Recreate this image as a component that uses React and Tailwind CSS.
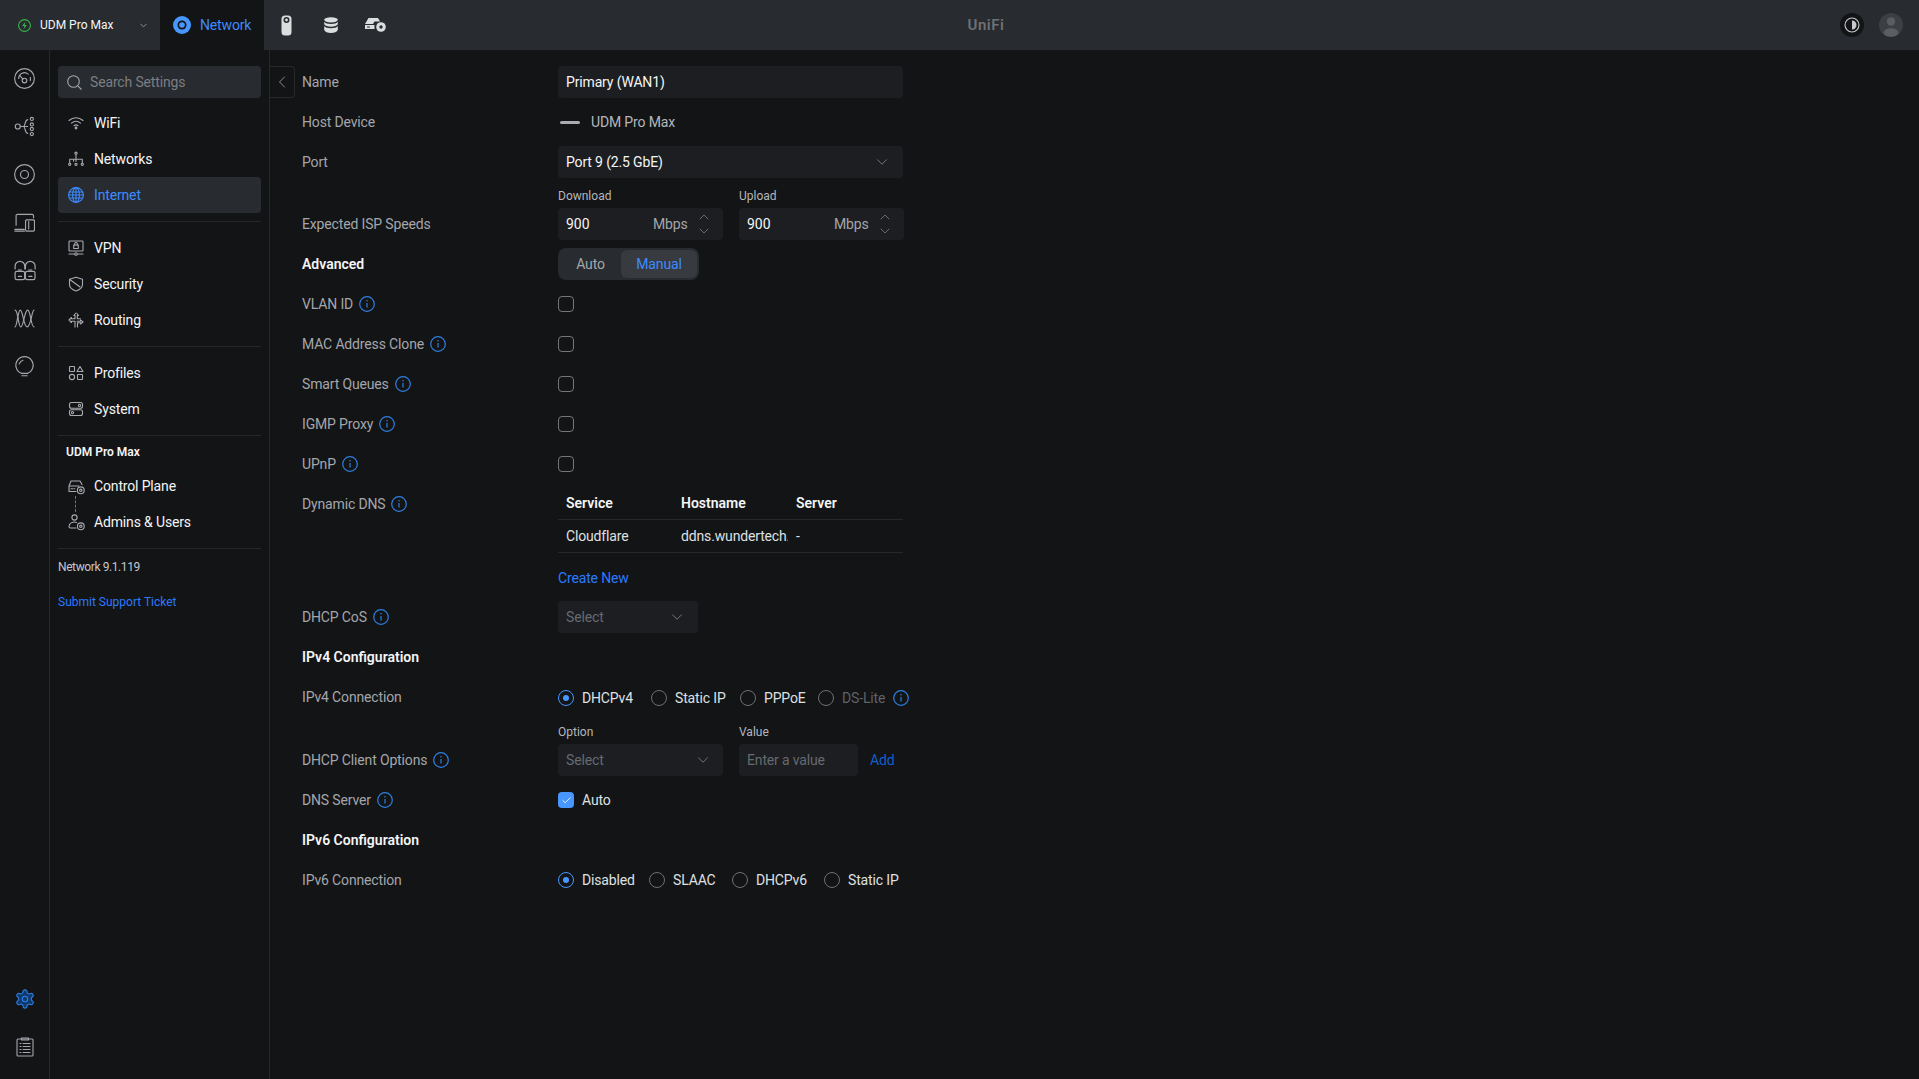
import React from "react";
import { ChevronDown, ChevronUp, ChevronLeft, Check } from "lucide-react";

const line = {
  fill: "none",
  stroke: "currentColor",
  strokeWidth: 1.1,
  strokeLinecap: "round",
  strokeLinejoin: "round",
};

function Ico({ size = 20, vb = 20, className = "", children }) {
  return (
    <svg width={size} height={size} viewBox={`0 0 ${vb} ${vb}`} className={`shrink-0 ${className}`} {...line}>
      {children}
    </svg>
  );
}

const railIcons = [
  <Ico size={21} key="dash">
    <circle cx="10" cy="10" r="9.4" />
    <path d="M4.5 10a5.5 5.5 0 0 1 9-4.2M15.5 9a5.5 5.5 0 0 1 0 3" />
    <circle cx="10" cy="12" r="2.2" />
    <path d="M8.5 10.5 5.8 7.5" />
  </Ico>,
  <Ico size={21} key="topo">
    <circle cx="3.6" cy="10" r="2.4" />
    <path d="M6 10h4M9 10c2 0 1-6 4-6.5M9 10c2 0 1 6 4 6.5M10 10h3" />
    <circle cx="17" cy="2.8" r="1.5" />
    <circle cx="17" cy="8" r="1.5" />
    <circle cx="17" cy="12.4" r="1.5" />
    <circle cx="17" cy="17.2" r="1.5" />
  </Ico>,
  <Ico size={21} key="target">
    <circle cx="10" cy="10" r="9.4" />
    <circle cx="10" cy="10" r="3.8" />
  </Ico>,
  <Ico size={21} key="devices">
    <path d="M2 12.5V3.5a1.3 1.3 0 0 1 1.3-1.3h14a1.3 1.3 0 0 1 1.3 1.3v2" />
    <path d="M.8 16.5h9M.8 18.2h9.2" />
    <rect x="11" y="7.5" width="8.5" height="10.7" rx="1" />
    <path d="M14 9.2v7" />
  </Ico>,
  <Ico size={22} key="clients">
    <path d="M1 9V6.5a4.4 4.4 0 0 1 8.8 0V9M10.4 9V6.5a4.4 4.4 0 0 1 8.8 0V9" />
    <rect x="1" y="11.2" width="8.7" height="7.6" rx="1.6" />
    <rect x="10.4" y="11.2" width="8.7" height="7.6" rx="1.6" />
    <path d="M4 15.8h2.8M13.5 15.8h2.8" />
    <path d="M3.5 9h3.6v2.2H3.5zM13 9h3.6v2.2H13z" fill="currentColor" opacity=".55" stroke="none" />
  </Ico>,
  <Ico size={21} key="wave">
    <path d="M1 2c3 0 3 16 5.500 16S10 2 13 2s3 16 6 16" />
    <path d="M1 18c2 0 2.500-16 5-16s3 16 6.500 16S17 2 19 2" />
  </Ico>,
  <Ico size={21} key="bulb">
    <path d="M7 16.500A8.200 8.200 0 1 1 13 16.500" />
    <path d="M7 16.500h6M7.500 18.800h5" />
    <path d="M5 7.500a5.500 5.500 0 0 1 3.500-3.500" />
  </Ico>,
];

const navIcons = {
  wifi: (
    <Ico size={16} vb={16}>
      <path d="M1 5.500c4-3.600 10-3.600 14 0M3.500 8.200c2.700-2.300 6.300-2.300 9 0M6 10.600c1.300-.9 2.700-.9 4 0" />
      <circle cx="8" cy="13" r=".9" fill="currentColor" />
    </Ico>
  ),
  networks: (
    <Ico size={16} vb={16}>
      <circle cx="8" cy="2.200" r="1.100" />
      <path d="M8 3.300v7M1.700 12V8.300h12.600V12M5.600 8.300v2" />
      <circle cx="1.700" cy="13.300" r="1.100" />
      <circle cx="8" cy="13.300" r="1.100" />
      <circle cx="14.300" cy="13.300" r="1.100" />
    </Ico>
  ),
  globe: (
    <Ico size={16} vb={16}>
      <circle cx="8" cy="8" r="7.400" />
      <ellipse cx="8" cy="8" rx="3.400" ry="7.400" />
      <path d="M8 .6v14.800M1.300 5h13.400M1.300 11h13.400M.6 8h14.800" />
    </Ico>
  ),
  vpn: (
    <Ico size={16} vb={16}>
      <rect x="1" y="1" width="14" height="10" rx=".8" />
      <rect x="5.700" y="5" width="4.600" height="3.500" />
      <path d="M6.700 5V3.800a1.300 1.300 0 0 1 2.600 0V5M1 14h5.500M9.500 14H15" />
      <circle cx="8" cy="14" r="1.300" />
    </Ico>
  ),
  security: (
    <Ico size={16} vb={16}>
      <path d="M1.500 3.200 8 1.300l6.500 1.900v5c0 3.400-3 5.600-6.500 6.800-3.500-1.200-6.500-3.400-6.500-6.800z" />
      <path d="M1.800 3.500 12 11" />
    </Ico>
  ),
  routing: (
    <Ico size={16} vb={16}>
      <path d="M8 1 5.800 3.500H7v3.300H3.500V5.500L1 8l2.500 2.500V9.300H7V15" />
      <path d="M9 1.500 10.500 3.500H9.300v3.300h3.200M9 9.200h3.500V8L15 10l-2.500 2v-1.200H9.500V15" />
    </Ico>
  ),
  profiles: (
    <Ico size={16} vb={16}>
      <rect x="1.500" y="1.500" width="5" height="5" rx=".6" />
      <path d="M12 1.500 15 6.500H9z" />
      <circle cx="4" cy="12" r="2.600" />
      <rect x="9.500" y="9.500" width="5" height="5" rx=".6" />
    </Ico>
  ),
  system: (
    <Ico size={16} vb={16}>
      <rect x="1.500" y="1.500" width="13" height="5.800" rx="2" />
      <rect x="1.500" y="8.700" width="13" height="5.800" rx="2" />
      <circle cx="11.500" cy="4.400" r="1.100" />
      <circle cx="4.500" cy="11.600" r="1.100" />
    </Ico>
  ),
  control: (
    <Ico size={17} vb={17}>
      <path d="M1 8 3 3h9l2 3.500M1 8v5.500h7M1 8h10" />
      <path d="M3 10.700h1.500M5.800 10.700h1" />
      <circle cx="12.800" cy="12.300" r="3.400" />
      <circle cx="12.800" cy="12.300" r="1.200" />
    </Ico>
  ),
  admins: (
    <Ico size={17} vb={17}>
      <circle cx="6.500" cy="3.500" r="2.600" />
      <path d="M8.500 8.500C5.500 7 1 9 1 12.500c0 1 .8 1.500 1.500 1.500H8" />
      <circle cx="12.800" cy="12.300" r="3.400" />
      <circle cx="12.800" cy="12.300" r="1.200" />
    </Ico>
  ),
};

function Info() {
  return (
    <svg width="16" height="16" viewBox="0 0 16 16" className="shrink-0 text-[#2f7fe0]" fill="none" stroke="currentColor" strokeWidth="1.200">
      <circle cx="8" cy="8" r="7.300" />
      <path d="M8 7v4.500" />
      <circle cx="8" cy="4.700" r=".8" fill="currentColor" stroke="none" />
    </svg>
  );
}

function NavItem({ icon, label, active }) {
  return (
    <div className={`relative h-9 flex items-center pl-[10px] gap-[10px] rounded-[4px] text-sm ${active ? "bg-[#282b2f] text-[#3d8bff]" : "text-[#f4f5f6]"}`}>
      <span className={`w-[16px] flex justify-center ${active ? "" : "text-[#a9abb0]"}`}>{icon}</span>
      <span>{label}</span>
    </div>
  );
}

function Row({ label, info, bold, children, className = "" }) {
  return (
    <div className={`flex h-10 items-center ${className}`}>
      <div className={`w-[256px] shrink-0 flex items-center gap-[6px] text-sm ${bold ? "font-semibold tracking-normal text-[#f4f5f6]" : "text-[#a4a6ab]"}`}>
        <span>{label}</span>
        {info && <Info />}
      </div>
      {children}
    </div>
  );
}

function Checkbox() {
  return <div className="size-4 rounded-[4px] border border-[#74777c]" />;
}

function Radio({ label, on, dim, className = "" }) {
  return (
    <div className={`flex items-center gap-2 text-sm ${dim ? "text-[#5f6267]" : "text-[#dfe0e2]"} ${className}`}>
      <span className={`size-4 rounded-full border flex items-center justify-center ${on ? "border-[#4797ff]" : "border-[#6c6f74]"}`}>
        {on && <span className="size-[6px] rounded-full bg-[#4797ff]" />}
      </span>
      {label}
    </div>
  );
}

function Select({ text, placeholder, className = "" }) {
  return (
    <div className={`h-8 flex items-center justify-between rounded-[4px] bg-[#1c1e21] pl-2 pr-[12px] text-sm ${placeholder ? "text-[#666a70]" : "text-[#f4f5f6]"} ${className}`}>
      <span>{text}</span>
      <ChevronDown size={18} strokeWidth={1} className="text-[#8f9297]" />
    </div>
  );
}

function SpeedInput({ label }) {
  return (
    <div className="w-[165px]">
      <div className="h-[12px] mb-[6px] flex items-center text-xs tracking-normal text-[#b4b7bc]">{label}</div>
      <div className="h-8 flex items-center rounded-[4px] bg-[#1c1e21] pl-2 text-sm">
        <input readOnly defaultValue="900" className="w-[87px] bg-transparent tracking-normal text-[#f4f5f6] outline-none" />
        <span className="text-[#a4a6ab] w-[43px]">Mbps</span>
        <span className="flex flex-col -space-y-[2px] text-[#8f9297]">
          <ChevronUp size={16} strokeWidth={1} />
          <ChevronDown size={16} strokeWidth={1} />
        </span>
      </div>
    </div>
  );
}

function TopBar() {
  return (
    <div className="h-[50px] shrink-0 bg-[#282b2f] flex items-center">
      <div className="w-[160px] flex items-center pl-[18px] text-xs tracking-normal text-[#f4f5f6]">
        <svg width="13" height="13" viewBox="0 0 13 13" className="mr-[9px]" fill="none">
          <circle cx="6.500" cy="6.500" r="5.900" stroke="#39b54a" strokeWidth="1.100" />
          <path d="M7.300 2.800 4.200 7h2.200l-.8 3.200L8.800 6H6.600z" fill="#39b54a" />
        </svg>
        <span className="w-[98px]">UDM Pro Max</span>
        <ChevronDown size={11} strokeWidth={1.500} className="text-[#b4b7bc]" />
      </div>
      <div className="w-[104px] h-full bg-[#131416] flex items-center pl-[13px] gap-[9px] text-sm text-[#3d8bff]">
        <svg width="18" height="18" viewBox="0 0 18 18">
          <circle cx="9" cy="9" r="9" fill="#4797ff" />
          <circle cx="9" cy="9" r="4.500" fill="#131416" />
          <circle cx="9" cy="9" r="2.800" fill="#4797ff" />
        </svg>
        Network
      </div>
      <svg width="11" height="21" viewBox="0 0 11 21" className="ml-[17px]">
        <rect x=".5" y=".5" width="10" height="20" rx="3.500" fill="#dcdddf" />
        <circle cx="5.500" cy="5" r="3" fill="#282b2f" />
        <circle cx="5.500" cy="5" r="1.400" fill="#dcdddf" />
      </svg>
      <svg width="14" height="16" viewBox="0 0 14 16" className="ml-[32px]" fill="#dcdddf">
        <ellipse cx="7" cy="2.800" rx="6.800" ry="2.600" />
        <path d="M.2 4.800c1 1.500 3.500 2.200 6.800 2.200s5.800-.7 6.800-2.200v2.500C13 9 10.300 9.700 7 9.700S1 9 .2 7.300zM.2 9c1 1.500 3.500 2.200 6.800 2.200s5.800-.7 6.800-2.200v4c-.8 2-3.500 3-6.800 3s-6-1-6.800-3z" />
      </svg>
      <svg width="21" height="14" viewBox="0 0 21 14" className="ml-[27px]" fill="#dcdddf">
        <path d="M3.500 0h9.500l2 3.500H9.500L8 6H0z" />
        <path d="M0 7h9.500v4H0z" />
        <circle cx="16" cy="9" r="4.800" />
        <circle cx="16" cy="9" r="1.700" fill="#282b2f" />
        <path d="M2 9h3" stroke="#282b2f" />
      </svg>
      <div className="flex-1 flex justify-center pr-[254px]">
        <span className="text-[15px] font-semibold text-[#6e7176] tracking-[.5px]">UniFi</span>
      </div>
      <div className="flex items-center gap-[15px] pr-[16px]">
        <span className="size-6 rounded-full bg-[#131416] flex items-center justify-center">
          <svg width="16" height="16" viewBox="0 0 16 16">
            <circle cx="8" cy="8" r="7" fill="none" stroke="#c8cacd" strokeWidth="1.100" />
            <path d="M8 3.500a4.500 4.500 0 0 1 0 9z" fill="#c8cacd" />
          </svg>
        </span>
        <svg width="24" height="24" viewBox="0 0 24 24">
          <circle cx="12" cy="12" r="12" fill="#3c3f44" />
          <circle cx="12" cy="8.500" r="4.200" fill="#5a5d62" />
          <ellipse cx="12" cy="19.500" rx="7.500" ry="4.300" fill="#5a5d62" />
        </svg>
      </div>
    </div>
  );
}

function Rail() {
  return (
    <div className="w-[50px] shrink-0 border-r border-[#26282c] flex flex-col items-center justify-between text-[#a4a6ab]">
      <div className="flex flex-col pt-[4px]">
        {railIcons.map((icon, i) => (
          <div key={i} className="h-12 flex items-center justify-center">{icon}</div>
        ))}
      </div>
      <div className="flex flex-col pb-[8px]">
        <div className="h-12 flex items-center justify-center text-[#2f7fe0]">
          <svg width="22" height="22" viewBox="0 0 24 24" fill="#0f3a70" stroke="currentColor" strokeWidth="1.200" strokeLinejoin="round">
            <path d="M12.220 2h-.44a2 2 0 0 0-2 2v.180a2 2 0 0 1-1 1.730l-.43.250a2 2 0 0 1-2 0l-.15-.080a2 2 0 0 0-2.730.730l-.220.380a2 2 0 0 0 .730 2.730l.150.100a2 2 0 0 1 1 1.720v.510a2 2 0 0 1-1 1.740l-.150.090a2 2 0 0 0-.730 2.730l.220.380a2 2 0 0 0 2.730.730l.150-.080a2 2 0 0 1 2 0l.430.250a2 2 0 0 1 1 1.730V20a2 2 0 0 0 2 2h.440a2 2 0 0 0 2-2v-.180a2 2 0 0 1 1-1.730l.430-.250a2 2 0 0 1 2 0l.150.080a2 2 0 0 0 2.730-.730l.220-.390a2 2 0 0 0-.730-2.730l-.150-.080a2 2 0 0 1-1-1.740v-.500a2 2 0 0 1 1-1.740l.150-.090a2 2 0 0 0 .730-2.730l-.220-.380a2 2 0 0 0-2.730-.730l-.150.080a2 2 0 0 1-2 0l-.430-.250a2 2 0 0 1-1-1.730V4a2 2 0 0 0-2-2z" />
            <circle cx="12" cy="12" r="3" />
          </svg>
        </div>
        <div className="h-12 flex items-center justify-center">
          <Ico size={20}>
            <rect x="2" y="2" width="16" height="17" rx="1" />
            <path d="M6.500 1h7v2h-7zM8 6.500h7M8 9.500h7M8 12.500h7M8 15.500h7M5 6.500h1M5 9.500h1M5 12.500h1M5 15.500h1" />
          </Ico>
        </div>
      </div>
    </div>
  );
}

function Divider({ className = "" }) {
  return <div className={`h-px bg-[#25272b] ${className}`} />;
}

function Sidebar() {
  return (
    <div className="w-[220px] shrink-0 border-r border-[#26282c] px-2 pt-4">
      <div className="h-8 rounded-[4px] bg-[#282b2f] flex items-center pl-[9px] gap-[8px] mb-[7px]">
        <svg width="15" height="15" viewBox="0 0 15 15" fill="none" stroke="#a4a6ab" strokeWidth="1.100">
          <circle cx="6.500" cy="6.500" r="5.800" />
          <path d="m10.800 10.800 3.700 3.700" />
        </svg>
        <input readOnly placeholder="Search Settings" className="bg-transparent w-[160px] text-sm outline-none placeholder:text-[#7b7e83]" />
      </div>
      <NavItem icon={navIcons.wifi} label="WiFi" />
      <NavItem icon={navIcons.networks} label="Networks" />
      <NavItem icon={navIcons.globe} label="Internet" active />
      <Divider className="mt-2 mb-[8px]" />
      <NavItem icon={navIcons.vpn} label="VPN" />
      <NavItem icon={navIcons.security} label="Security" />
      <NavItem icon={navIcons.routing} label="Routing" />
      <Divider className="mt-2 mb-[8px]" />
      <NavItem icon={navIcons.profiles} label="Profiles" />
      <NavItem icon={navIcons.system} label="System" />
      <Divider className="mt-2" />
      <div className="h-8 flex items-center pl-2 text-xs font-semibold tracking-normal text-[#f4f5f6]">UDM Pro Max</div>
      <div className="relative">
        <NavItem icon={navIcons.control} label="Control Plane" />
        <NavItem icon={navIcons.admins} label="Admins & Users" />
        <div className="absolute left-[17px] top-[28px] h-[16px] border-l border-dashed border-[#6c6f74]" />
      </div>
      <Divider className="mt-2" />
      <div className="h-[35px] flex items-center text-xs tracking-[-0.4px] text-[#c4c6ca]">Network 9.1.119</div>
      <div className="h-[36px] flex items-center text-xs tracking-normal text-[#2a7aff]">Submit Support Ticket</div>
    </div>
  );
}

function Form() {
  return (
    <div className="relative flex-1 pl-8 pt-3">
      <div className="absolute left-0 top-4 h-8 w-[25px] border border-l-0 border-[#26282c] rounded-r-[4px] flex items-center justify-center text-[#a4a6ab]">
        <ChevronLeft size={20} strokeWidth={1} />
      </div>
      <div className="w-[601px]">
        <Row label="Name">
          <input readOnly defaultValue="Primary (WAN1)" className="w-[345px] h-8 rounded-[4px] bg-[#1c1e21] px-2 text-sm text-[#f4f5f6] outline-none" />
        </Row>
        <Row label="Host Device">
          <div className="flex items-center text-sm text-[#b4b7bc]">
            <span className="w-[20px] h-[3px] ml-[2px] mr-[11px] rounded-full bg-[#a9abb0]" />
            UDM Pro Max
          </div>
        </Row>
        <Row label="Port">
          <Select text="Port 9 (2.5 GbE)" className="w-[345px]" />
        </Row>
        <div className="flex h-[62px]">
          <div className="w-[256px] shrink-0 pt-[32px] h-[62px] leading-[20px] text-sm text-[#a4a6ab]">Expected ISP Speeds</div>
          <div className="flex gap-4 pt-2">
            <SpeedInput label="Download" />
            <SpeedInput label="Upload" />
          </div>
        </div>
        <Row label="Advanced" bold>
          <div className="h-8 w-[141px] rounded-lg bg-[#282b2f] p-[2px] flex text-sm">
            <div className="w-[61px] flex items-center justify-center text-[#a4a6ab]">Auto</div>
            <div className="w-[76px] flex items-center justify-center rounded-md bg-[#373a3f] text-[#3d8bff]">Manual</div>
          </div>
        </Row>
        <Row label="VLAN ID" info><Checkbox /></Row>
        <Row label="MAC Address Clone" info><Checkbox /></Row>
        <Row label="Smart Queues" info><Checkbox /></Row>
        <Row label="IGMP Proxy" info><Checkbox /></Row>
        <Row label="UPnP" info><Checkbox /></Row>
        <div className="flex h-[113px]">
          <div className="w-[256px] shrink-0 h-10 flex items-center gap-[6px] text-sm text-[#a4a6ab]">
            Dynamic DNS <Info />
          </div>
          <div className="w-[345px] pt-[3px] text-sm">
            <div className="h-[33px] grid grid-cols-3 items-center border-b border-[#26282c] font-semibold tracking-normal text-[#f4f5f6]">
              <span className="px-2">Service</span>
              <span className="px-2">Hostname</span>
              <span className="px-2">Server</span>
            </div>
            <div className="h-[33px] grid grid-cols-3 items-center border-b border-[#26282c] text-[#dfe0e2]">
              <span className="px-2">Cloudflare</span>
              <span className="ml-2 overflow-hidden whitespace-nowrap">ddns.wundertech.net</span>
              <span className="px-2">-</span>
            </div>
            <div className="mt-[15px] text-[#2a7aff]">Create New</div>
          </div>
        </div>
        <Row label="DHCP CoS" info>
          <Select text="Select" placeholder className="w-[140px]" />
        </Row>
        <Row label="IPv4 Configuration" bold />
        <Row label="IPv4 Connection">
          <div className="flex items-center pt-px">
            <Radio label="DHCPv4" on className="w-[93px]" />
            <Radio label="Static IP" className="w-[89px]" />
            <Radio label="PPPoE" className="w-[78px]" />
            <Radio label="DS-Lite" dim className="w-[75px]" />
            <Info />
          </div>
        </Row>
        <div className="flex h-[63px]">
          <div className="w-[256px] shrink-0 pt-[33px] flex items-start gap-[6px] text-sm text-[#a4a6ab]">
            <span className="leading-[20px]">DHCP Client Options</span>
            <span className="pt-[2px]"><Info /></span>
          </div>
          <div className="flex gap-4 pt-[9px]">
            <div className="w-[165px]">
              <div className="h-[12px] mb-[6px] flex items-center text-xs tracking-normal text-[#b4b7bc]">Option</div>
              <Select text="Select" placeholder className="!pr-[11px]" />
            </div>
            <div>
              <div className="h-[12px] mb-[6px] flex items-center text-xs tracking-normal text-[#b4b7bc]">Value</div>
              <div className="flex items-center gap-3 text-sm">
                <input readOnly placeholder="Enter a value" className="w-[119px] h-8 rounded-[4px] bg-[#1c1e21] px-2 outline-none placeholder:text-[#666a70]" />
                <span className="text-[#0f5fd0]">Add</span>
              </div>
            </div>
          </div>
        </div>
        <Row label="DNS Server" info>
          <div className="flex items-center gap-2 text-sm text-[#dfe0e2]">
            <span className="size-4 rounded-[4px] bg-[#4797ff] flex items-center justify-center text-white">
              <Check size={11} strokeWidth={1.800} />
            </span>
            Auto
          </div>
        </Row>
        <Row label="IPv6 Configuration" bold />
        <Row label="IPv6 Connection">
          <div className="flex items-center">
            <Radio label="Disabled" on className="w-[91px]" />
            <Radio label="SLAAC" className="w-[83px]" />
            <Radio label="DHCPv6" className="w-[92px]" />
            <Radio label="Static IP" />
          </div>
        </Row>
      </div>
    </div>
  );
}

export default function App() {
  return (
    <div className="h-screen flex flex-col bg-[#131416] overflow-hidden tracking-[-0.15px] font-['Roboto',sans-serif]">
      <TopBar />
      <div className="flex flex-1 min-h-0">
        <Rail />
        <Sidebar />
        <Form />
      </div>
    </div>
  );
}
